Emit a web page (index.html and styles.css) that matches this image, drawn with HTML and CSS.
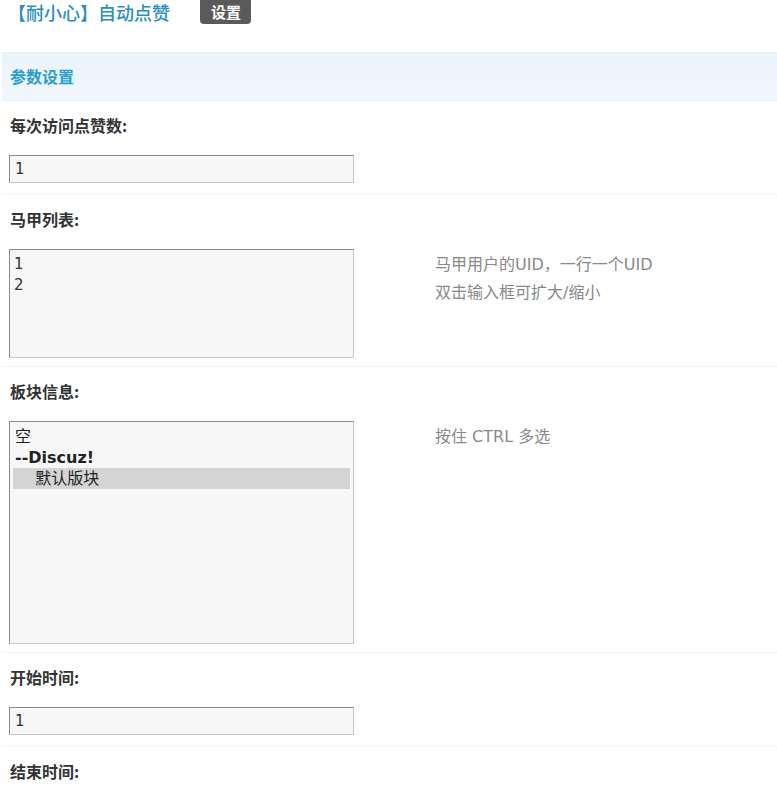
FILE: index.html
```html
<!DOCTYPE html>
<html lang="zh-CN">
<head>
<meta charset="utf-8">
<title>【耐小心】自动点赞</title>
<link rel="stylesheet" href="styles.css">
</head>
<body>
<div class="topbar">
  <h3 class="title">【耐小心】自动点赞</h3>
  <span class="tab">设置</span>
</div>
<div class="form">
  <div class="partition">参数设置</div>

  <div class="label-row">每次访问点赞数:</div>
  <div class="value-row">
    <div class="field"><input class="txt" type="text" value="1"></div>
  </div>

  <div class="label-row">马甲列表:</div>
  <div class="value-row">
    <div class="field"><textarea class="area">1
2</textarea></div>
    <div class="tips">马甲用户的UID，一行一个UID<br>双击输入框可扩大/缩小</div>
  </div>

  <div class="label-row">板块信息:</div>
  <div class="value-row">
    <div class="field">
      <div class="select">
        <div class="opt">空</div>
        <div class="opt group">--Discuz!</div>
        <div class="opt sel">&nbsp;&nbsp;&nbsp;&nbsp;默认版块</div>
      </div>
    </div>
    <div class="tips">按住 CTRL 多选</div>
  </div>

  <div class="label-row">开始时间:</div>
  <div class="value-row">
    <div class="field"><input class="txt" type="text" value="1"></div>
  </div>

  <div class="label-row">结束时间:</div>
</div>
</body>
</html>
```

FILE: styles.css
```css
html, body {
  margin: 0;
  padding: 0;
  background: #fff;
}
body {
  font-family: "DejaVu Sans", "Noto Sans CJK SC", sans-serif;
  color: #333;
  font-size: 15px;
}
.topbar {
  display: flex;
  align-items: flex-start;
  height: 52px;
  padding-left: 8px;
}
.title {
  margin: 0;
  font-family: "Noto Sans CJK SC", sans-serif;
  font-size: 18px;
  font-weight: 500;
  color: #2a8fbd;
  line-height: 24px;
}
.tab {
  margin-left: 30px;
  background: #5a5a5a;
  color: #fff;
  font-family: "Noto Sans CJK SC", sans-serif;
  font-weight: 700;
  font-size: 15px;
  line-height: 24px;
  padding: 0 10px 0 11px;
  border-radius: 0 0 4px 4px;
}
.form {
  margin-left: 2px;
  width: 775px;
}
.partition {
  background: linear-gradient(#ebf3fb, #f2f7fd);
  border-top: 1px solid #e6eef7;
  border-bottom: 1px dotted #deeffb;
  color: #2a9fc9;
  font-family: "Noto Sans CJK SC", sans-serif;
  font-weight: 700;
  font-size: 16px;
  height: 47px;
  line-height: 47px;
  padding-left: 8px;
}
.label-row {
  padding: 14px 8px 11px;
  font-family: "Noto Sans CJK SC", sans-serif;
  font-weight: 700;
  font-size: 16px;
  line-height: 20px;
  color: #333;
}
.value-row {
  display: flex;
  align-items: flex-start;
  padding: 9px 7px 8px;
  border-bottom: 1px dotted #deeffb;
}
.field {
  width: 426px;
}
.txt {
  display: block;
  box-sizing: border-box;
  width: 345px;
  height: 28px;
  margin: 0 0 3px;
  padding: 2px 5px;
  background: #f7f7f7;
  border: 1px solid #c8c8c8;
  border-top-color: #8a8a8a;
  border-left-color: #8a8a8a;
  font-family: "DejaVu Sans", sans-serif;
  font-size: 15px;
  color: #333;
}
.area {
  display: block;
  box-sizing: border-box;
  width: 345px;
  height: 109px;
  margin: 0;
  padding: 4px 4px;
  background: #f7f7f7;
  border: 1px solid #c8c8c8;
  border-top-color: #8a8a8a;
  border-left-color: #8a8a8a;
  font-family: "DejaVu Sans", sans-serif;
  font-size: 15px;
  line-height: 21px;
  color: #333;
  resize: none;
}
.select {
  box-sizing: border-box;
  width: 345px;
  height: 223px;
  padding: 4px 3px;
  background: #f7f7f7;
  border: 1px solid #c8c8c8;
  border-top-color: #8a8a8a;
  border-left-color: #8a8a8a;
}
.opt {
  font-family: "DejaVu Sans", "Noto Sans CJK SC", sans-serif;
  font-size: 16px;
  line-height: 21px;
  padding-left: 2px;
  color: #222;
  white-space: pre;
}
.opt.group {
  font-weight: 700;
}
.opt.sel {
  background: #d4d4d4;
}
.tips {
  padding-top: 2px;
  font-family: "DejaVu Sans", "Noto Sans CJK SC", sans-serif;
  font-size: 16px;
  line-height: 28px;
  color: #888;
}
```
